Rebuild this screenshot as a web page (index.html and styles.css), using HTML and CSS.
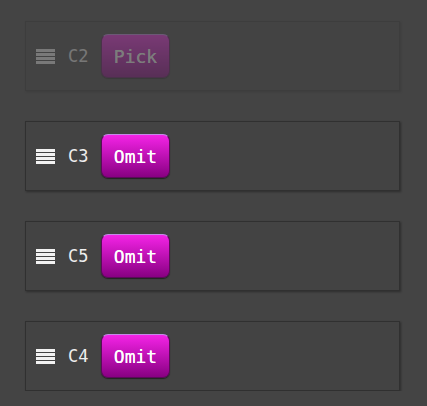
FILE: index.html
```html
<!DOCTYPE html>
<html lang="en">
  <head>
    <meta charset="UTF-8" />
    <meta name="viewport" content="width=device-width, initial-scale=1.0" />
    <title>Columns</title>
    <link rel="stylesheet" href="styles.css">
  </head>
  <body>
    <ul class="column-list">
      <li class="column-item dragging">
        <span class="handle">
          <svg width="19" height="15" viewBox="0 0 19 15"><rect y="0" width="19" height="3"/><rect y="4" width="19" height="3"/><rect y="8" width="19" height="3"/><rect y="12" width="19" height="3"/></svg>
        </span>
        <span class="column-name">C2</span>
        <button class="toggle">Pick</button>
      </li>
      <li class="column-item">
        <span class="handle">
          <svg width="19" height="15" viewBox="0 0 19 15"><rect y="0" width="19" height="3"/><rect y="4" width="19" height="3"/><rect y="8" width="19" height="3"/><rect y="12" width="19" height="3"/></svg>
        </span>
        <span class="column-name">C3</span>
        <button class="toggle">Omit</button>
      </li>
      <li class="column-item">
        <span class="handle">
          <svg width="19" height="15" viewBox="0 0 19 15"><rect y="0" width="19" height="3"/><rect y="4" width="19" height="3"/><rect y="8" width="19" height="3"/><rect y="12" width="19" height="3"/></svg>
        </span>
        <span class="column-name">C5</span>
        <button class="toggle">Omit</button>
      </li>
      <li class="column-item">
        <span class="handle">
          <svg width="19" height="15" viewBox="0 0 19 15"><rect y="0" width="19" height="3"/><rect y="4" width="19" height="3"/><rect y="8" width="19" height="3"/><rect y="12" width="19" height="3"/></svg>
        </span>
        <span class="column-name">C4</span>
        <button class="toggle">Omit</button>
      </li>
    </ul>
  </body>
</html>
```

FILE: styles.css
```css
* {
  margin: 0;
  padding: 0;
  box-sizing: border-box;
}

body {
  font-family: "DejaVu Sans Mono", monospace;
  background-color: #444;
  color: #eee;
}

.column-list {
  list-style: none;
  display: flex;
  flex-direction: column;
  gap: 30px;
  padding: 21px 27px 0 25px;
}

.column-item {
  display: flex;
  align-items: center;
  height: 70px;
  padding: 0 10px;
  border: 1px solid #303030;
  box-shadow: 1px 1px 2px rgba(0, 0, 0, 0.35);
  background-color: #434343;
}

.column-item.dragging {
  opacity: 0.3;
}

.handle {
  display: flex;
  width: 19px;
  height: 15px;
  margin-right: 13px;
}

.handle svg {
  fill: #f2f2f2;
}

.column-name {
  font-size: 17px;
  width: 21px;
  margin-right: 12px;
}

.toggle {
  font-family: "DejaVu Sans Mono", monospace;
  font-size: 18px;
  color: #fff;
  width: 69px;
  height: 44px;
  border: 1px solid #5a0a58;
  border-top-color: #c48ae8;
  border-radius: 7px;
  background: linear-gradient(#f423e6, #880082);
  box-shadow: 0 1px 1px rgba(0, 0, 0, 0.5);
  text-shadow: 0 0 0.5px #fff;
}
```
